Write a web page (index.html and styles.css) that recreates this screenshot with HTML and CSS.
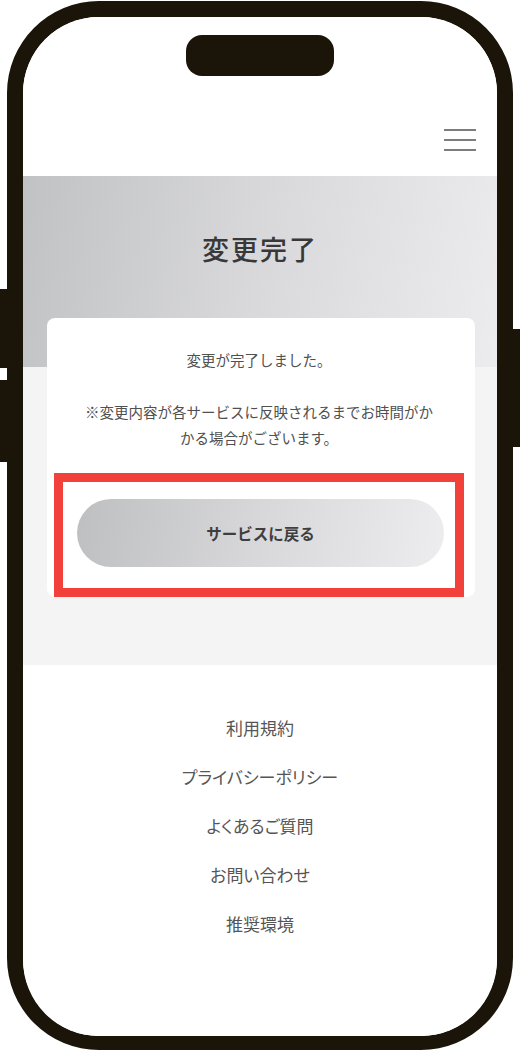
FILE: index.html
```html
<!DOCTYPE html>
<html lang="ja">
<head>
<meta charset="utf-8">
<title>変更完了</title>
<link rel="stylesheet" href="styles.css">
</head>
<body>
<div class="phone">
  <span class="side-btn side-left-1"></span>
  <span class="side-btn side-left-2"></span>
  <span class="side-btn side-right"></span>
  <div class="screen">
    <span class="notch"></span>
    <header class="header">
      <button class="menu" aria-label="メニュー">
        <span></span><span></span><span></span>
      </button>
    </header>
    <section class="hero">
      <h1 class="title">変更完了</h1>
    </section>
    <main class="main">
      <div class="card">
        <p class="msg">変更が完了しました。</p>
        <p class="note">※変更内容が各サービスに反映されるまでお時間がか<br>かる場合がございます。</p>
        <div class="highlight">
          <a class="back-btn" href="#">サービスに戻る</a>
        </div>
      </div>
    </main>
    <footer class="footer">
      <a href="#">利用規約</a>
      <a href="#">プライバシーポリシー</a>
      <a href="#">よくあるご質問</a>
      <a href="#">お問い合わせ</a>
      <a href="#">推奨環境</a>
    </footer>
  </div>
</div>
</body>
</html>
```

FILE: styles.css
```css
* { box-sizing: border-box; }
html, body {
  margin: 0;
  padding: 0;
  background: #ffffff;
}
body {
  width: 520px;
  height: 1054px;
  overflow: hidden;
  font-family: "Noto Sans CJK JP", "Noto Sans", sans-serif;
  color: #444;
}
.phone {
  position: relative;
  margin: 1px 7px 0 7px;
  width: 506px;
  height: 1049px;
  border-style: solid;
  border-color: #1b1409;
  border-width: 16px 16px 14px 16px;
  border-radius: 92px;
}
.side-btn {
  position: absolute;
  width: 8px;
  background: #1b1409;
}
.side-left-1 { left: -23px; top: 272px; height: 79px; }
.side-left-2 { left: -23px; top: 363px; height: 82px; }
.side-right { right: -23px; top: 312px; height: 118px; }
.screen {
  position: relative;
  height: 100%;
  border-radius: 76px;
  overflow: hidden;
  display: flex;
  flex-direction: column;
  background: #fff;
}
.notch {
  position: absolute;
  top: 18px;
  left: 50%;
  width: 148px;
  height: 41px;
  margin-left: -74px;
  border-radius: 16px;
  background: #1b1409;
}
.header {
  height: 159px;
  flex: none;
  display: flex;
  justify-content: flex-end;
  align-items: flex-end;
  padding: 0 21px 25px 0;
}
.menu {
  display: flex;
  flex-direction: column;
  gap: 8px;
  width: 32px;
  padding: 0;
  border: 0;
  background: none;
}
.menu span {
  display: block;
  height: 2px;
  background: #7d7d7d;
}
.hero {
  height: 191px;
  flex: none;
  background: linear-gradient(100deg, #c1c2c4 0%, #d9d9db 50%, #ececee 100%);
  display: flex;
  justify-content: center;
  padding-top: 55px;
}
.title {
  margin: 0;
  font-size: 27px;
  line-height: 36px;
  font-weight: 500;
  letter-spacing: 2px;
  color: #383838;
}
.main {
  height: 298px;
  flex: none;
  background: #f4f4f4;
  padding: 0 22px 0 24px;
}
.card {
  margin-top: -49px;
  background: #fff;
  border-radius: 8px;
  padding: 29px 11px 0 7px;
  text-align: center;
  font-size: 14.5px;
  line-height: 26px;
  color: #505050;
}
.msg { margin: 0; }
.note { margin: 26px 0 22px; }
.highlight {
  border: 9px solid #f2403a;
  padding: 17px 11px 21px 14px;
}
.back-btn {
  display: flex;
  align-items: center;
  justify-content: center;
  height: 68px;
  border-radius: 34px;
  background: linear-gradient(100deg, #bebfc1 0%, #d8d8da 50%, #ededef 100%);
  color: #3e3e3e;
  font-weight: 700;
  font-size: 15.5px;
  text-decoration: none;
}
.footer {
  flex: 1;
  display: flex;
  flex-direction: column;
  align-items: center;
  gap: 24px;
  padding-top: 50px;
}
.footer a {
  font-size: 17px;
  line-height: 25px;
  color: #555;
  text-decoration: none;
  font-feature-settings: "palt";
}
.footer a.kanji {
  letter-spacing: 2px;
}
```
